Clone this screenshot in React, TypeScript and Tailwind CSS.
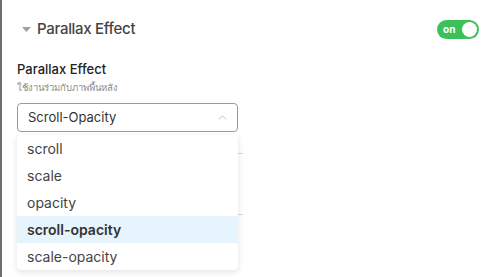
import { ChevronUp } from "lucide-react";

const options = ["scroll", "scale", "opacity", "scroll-opacity", "scale-opacity"];

const App = () => {
  const selected = "scroll-opacity";
  return (
    <div
      className="w-[500px] h-[277px] bg-white overflow-hidden flex"
      style={{ fontFamily: "Inter, 'Noto Sans', sans-serif" }}
    >
      <div className="w-[2px] bg-[#6e6e6e] shrink-0" />
      <div className="flex-1 flex flex-col">
        {/* header row */}
        <div className="flex items-center justify-between pl-[20px] pr-[21px] pt-[20px] h-[38px]">
          <div className="flex items-center gap-[6px]">
            <svg width="9" height="5" viewBox="0 0 9 5" className="mt-[1px]">
              <path d="M0 0 L9 0 L4.5 5 Z" fill="#a0a0a0" />
            </svg>
            <span className="text-[15px] font-medium text-[#444] tracking-[-0.3px]">Parallax Effect</span>
          </div>
          <div className="w-[42px] h-[19px] rounded-full bg-[#3cc15a] flex items-center justify-between pl-[6px] pr-[2px]">
            <span className="text-[10px] font-bold text-white leading-none">on</span>
            <div className="w-[15px] h-[15px] rounded-full bg-white" />
          </div>
        </div>

        <div className="pl-[15px] pt-[22px]">
          <div className="text-[13px] font-medium text-[#222] leading-[18px]">Parallax Effect</div>
          <div
            className="text-[9.5px] text-[#8a8a8a] leading-[14px] mt-[3px]"
            style={{ fontFamily: "'Noto Sans', sans-serif" }}
          >
            ใช้งานร่วมกับภาพพื้นหลัง
          </div>

          <div className="relative mt-[8px] w-[221px]">
            <div className="h-[29px] border border-[#6aa8dc] rounded-[4px] flex items-center justify-between pl-[10px] pr-[8px]">
              <span className="text-[13px] text-[#333]">Scroll-Opacity</span>
              <ChevronUp size={13} strokeWidth={1.5} color="#b5b5b5" />
            </div>

            {/* faint edges of the fields under the menu */}
            <div className="absolute left-[221px] top-[50px] w-[5px] h-[1px] bg-[#d6d6d6]" />
            <div className="absolute left-[221px] top-[111px] w-[5px] h-[1px] bg-[#d6d6d6]" />

            <div className="absolute left-0 top-[32px] w-[221px] bg-white rounded-[4px] shadow-[0_2px_6px_rgba(0,0,0,0.12)] overflow-hidden">
              {options.map((o) => (
                <div
                  key={o}
                  className={
                    o === selected
                      ? "h-[27px] flex items-center pl-[10px] text-[14px] font-semibold text-[#333] bg-[#e6f4fd]"
                      : "h-[27px] flex items-center pl-[10px] text-[14px] text-[#444]"
                  }
                >
                  {o}
                </div>
              ))}
            </div>
          </div>
        </div>
      </div>
    </div>
  );
};

export default App;
